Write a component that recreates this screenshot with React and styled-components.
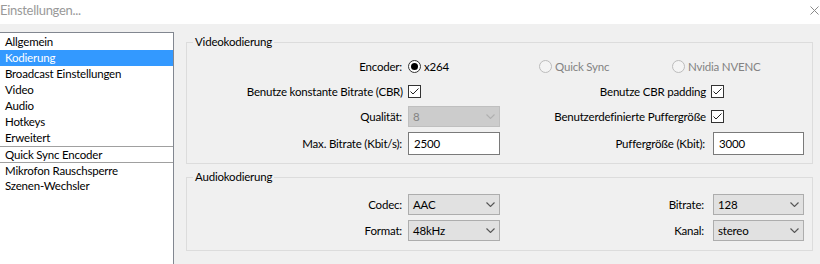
import React from 'react';
import styled, { createGlobalStyle } from 'styled-components';

const GlobalStyle = createGlobalStyle`
  html, body {
    margin: 0;
    padding: 0;
    height: 264px;
    overflow: hidden;
    background: #f0f0f0;
    font-family: Lato, "Noto Sans", sans-serif;
    font-size: 11.5px;
    letter-spacing: -0.2px;
    color: #000;
  }
  * { box-sizing: border-box; }
`;

const Window = styled.div`
  width: 820px;
  height: 264px;
  display: flex;
  flex-direction: column;
  overflow: hidden;
`;

const TitleBar = styled.div`
  height: 24px;
  flex: none;
  background: #fff;
  display: flex;
  align-items: center;
  justify-content: space-between;
  padding: 0 1px 4px 0;
`;

const TitleText = styled.span`
  font-size: 13px;
  color: #999;
  letter-spacing: -0.3px;
`;

const Body = styled.div`
  flex: 1;
  display: flex;
  min-height: 0;
`;

const Sidebar = styled.ul`
  list-style: none;
  margin: 8px 0 0 -1px;
  padding: 1px 0 0;
  width: 175px;
  height: 260px;
  flex: none;
  background: #fff;
  border: 1px solid #828790;
`;

const Item = styled.li`
  height: 16px;
  padding-left: 5px;
  white-space: nowrap;
  color: ${p => (p.$selected ? '#fff' : '#000')};
  background: ${p => (p.$selected ? '#3399ff' : 'transparent')};
  border-top: ${p => (p.$divider ? '1px solid #a0a0a0' : 'none')};
  line-height: ${p => (p.$divider ? '15px' : '16px')};
`;

const Content = styled.div`
  flex: 1;
  display: flex;
  flex-direction: column;
  gap: 5px;
  padding: 10px 7px 0 12px;
`;

const Group = styled.fieldset`
  margin: 0;
  padding: ${p => p.$pad};
  border: 1px solid #dcdcdc;
  min-width: 0;
`;

const Legend = styled.legend`
  margin-left: 6px;
  padding: 0 2px;
  line-height: 16px;
`;

const FormGrid = styled.div`
  display: grid;
  grid-template-columns: 215px 92px 1fr 91px;
  grid-template-rows: ${p => p.$rows};
  column-gap: 6px;
  row-gap: 5px;
  align-items: center;
`;

const Label = styled.div`
  text-align: right;
  white-space: nowrap;
  grid-column: ${p => p.$col || 'auto'};
  padding-right: ${p => p.$inset || 0}px;
`;

const CheckLabel = styled.label`
  grid-column: ${p => p.$col};
  display: flex;
  justify-content: flex-end;
  align-items: center;
  gap: 5px;
  white-space: nowrap;
  margin-right: ${p => p.$pull}px;
`;

const Box = styled.span`
  width: 13px;
  height: 13px;
  flex: none;
  border: 1px solid #333;
  background: #fff;
  display: inline-flex;
  align-items: center;
  justify-content: center;
`;

const RadioRow = styled.div`
  grid-column: ${p => p.$col || 'auto'};
  display: flex;
  align-items: center;
  padding-left: ${p => p.$indent || 0}px;
`;

const RadioOption = styled.label`
  display: flex;
  align-items: center;
  gap: 3px;
  width: ${p => (p.$width ? `${p.$width}px` : 'auto')};
  color: ${p => (p.$disabled ? '#838383' : '#000')};
  white-space: nowrap;
`;

const RadioCircle = styled.span`
  width: 13px;
  height: 13px;
  flex: none;
  border-radius: 50%;
  border: 1px solid ${p => (p.$disabled ? '#bcbcbc' : '#333')};
  background: ${p => (p.$disabled ? '#f4f4f4' : '#fff')};
  display: inline-flex;
  align-items: center;
  justify-content: center;
  &::after {
    content: '';
    width: 7px;
    height: 7px;
    border-radius: 50%;
    background: #000;
    display: ${p => (p.$checked ? 'block' : 'none')};
  }
`;

const TextBox = styled.div`
  grid-column: ${p => p.$col || 'auto'};
  height: 23px;
  border: 1px solid #7a7a7a;
  background: #fff;
  padding-left: 5px;
  display: flex;
  align-items: center;
`;

const Combo = styled.div`
  grid-column: ${p => p.$col || 'auto'};
  height: 21px;
  border: 1px solid ${p => (p.$disabled ? '#bfbfbf' : '#adadad')};
  background: ${p => (p.$disabled ? '#cccccc' : '#e1e1e1')};
  color: ${p => (p.$disabled ? '#838383' : '#000')};
  padding: 0 4px 0 4px;
  display: flex;
  align-items: center;
  justify-content: space-between;
`;

const Chevron = ({ disabled }) => (
  <svg width="9" height="5" viewBox="0 0 9 5">
    <path d="M0.5 0.5 L4.5 4.5 L8.5 0.5" fill="none" stroke={disabled ? '#b0b0b0' : '#555'} strokeWidth="1.1" />
  </svg>
);

const Check = () => (
  <Box>
    <svg width="11" height="11" viewBox="0 0 11 11">
      <path d="M1.5 5.5 L4 8 L9.5 2.5" fill="none" stroke="#222" strokeWidth="1" />
    </svg>
  </Box>
);

const CloseIcon = () => (
  <svg width="9" height="9" viewBox="0 0 9 9">
    <path d="M0.5 0.5 L8.5 8.5 M8.5 0.5 L0.5 8.5" stroke="#8a8a8a" strokeWidth="1" />
  </svg>
);

const pages = [
  { name: 'Allgemein' },
  { name: 'Kodierung', selected: true },
  { name: 'Broadcast Einstellungen' },
  { name: 'Video' },
  { name: 'Audio' },
  { name: 'Hotkeys' },
  { name: 'Erweitert' },
  { name: 'Quick Sync Encoder', divider: true },
  { name: 'Mikrofon Rauschsperre', divider: true },
  { name: 'Szenen-Wechsler' },
];

export default function App() {
  return (
    <Window>
      <GlobalStyle />
      <TitleBar>
        <TitleText>Einstellungen...</TitleText>
        <CloseIcon />
      </TitleBar>
      <Body>
        <Sidebar>
          {pages.map(p => (
            <Item key={p.name} $selected={p.selected} $divider={p.divider}>{p.name}</Item>
          ))}
        </Sidebar>
        <Content>
          <Group $pad="6px 8px 8px 0">
            <Legend>Videokodierung</Legend>
            <FormGrid $rows="20px 20px 21px 23px">
              <Label>Encoder:</Label>
              <RadioRow>
                <RadioOption><RadioCircle $checked />x264</RadioOption>
              </RadioRow>
              <RadioRow $col="3 / 5" $indent={33}>
                <RadioOption $disabled $width={133}><RadioCircle $disabled />Quick Sync</RadioOption>
                <RadioOption $disabled><RadioCircle $disabled />Nvidia NVENC</RadioOption>
              </RadioRow>

              <CheckLabel $col="1" $pull={-19}>Benutze konstante Bitrate (CBR)<Check /></CheckLabel>
              <CheckLabel $col="3" $pull={-17}>Benutze CBR padding<Check /></CheckLabel>

              <Label $col="1">Qualität:</Label>
              <Combo $disabled>8<Chevron disabled /></Combo>
              <CheckLabel $col="3" $pull={-17}>Benutzerdefinierte Puffergröße<Check /></CheckLabel>

              <Label $col="1">Max. Bitrate (Kbit/s):</Label>
              <TextBox>2500</TextBox>
              <Label $inset={2}>Puffergröße (Kbit):</Label>
              <TextBox>3000</TextBox>
            </FormGrid>
          </Group>
          <Group $pad="9px 8px 9px 0">
            <Legend>Audiokodierung</Legend>
            <FormGrid $rows="21px 21px">
              <Label>Codec:</Label>
              <Combo>AAC<Chevron /></Combo>
              <Label $inset={3}>Bitrate:</Label>
              <Combo>128<Chevron /></Combo>

              <Label>Format:</Label>
              <Combo>48kHz<Chevron /></Combo>
              <Label $inset={3}>Kanal:</Label>
              <Combo>stereo<Chevron /></Combo>
            </FormGrid>
          </Group>
        </Content>
      </Body>
    </Window>
  );
}
